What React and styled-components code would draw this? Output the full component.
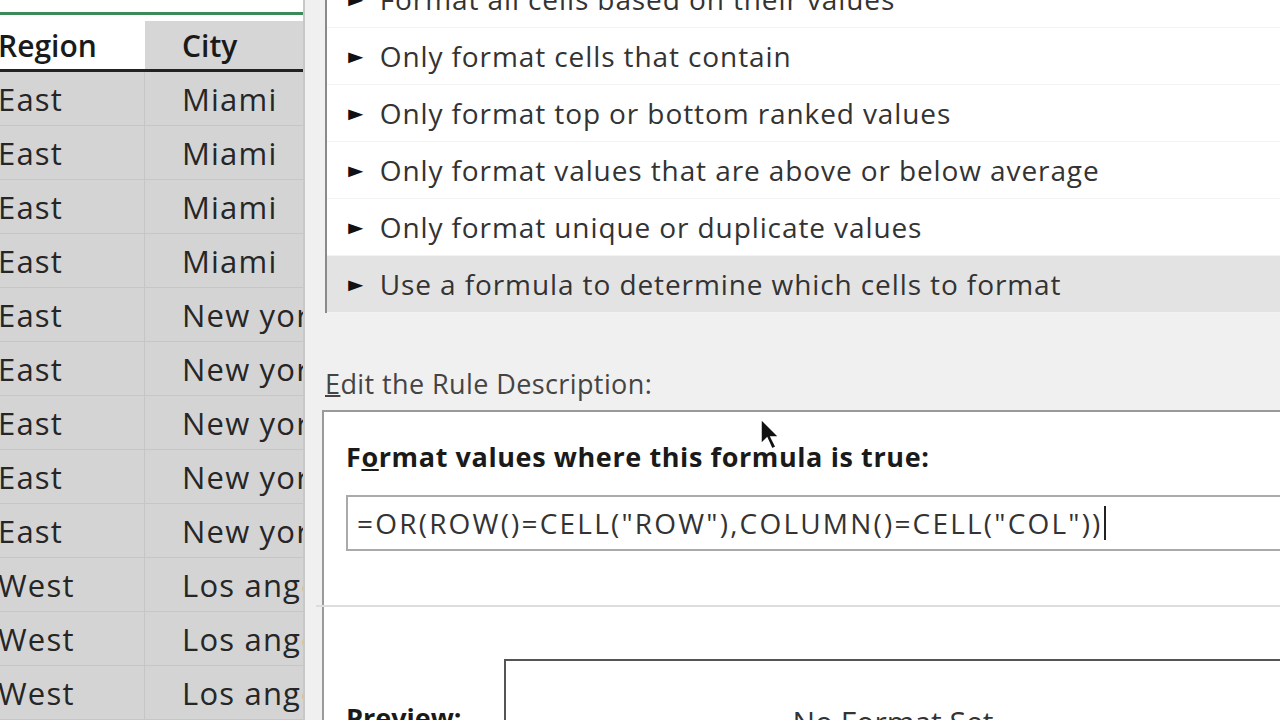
import React from "react";
import styled, { createGlobalStyle } from "styled-components";

const G = createGlobalStyle`
  html,body{margin:0;padding:0;}
  body{font-family:"Open Sans","Noto Sans",sans-serif;}
`;
const Page = styled.div`
  width:1280px;height:720px;overflow:hidden;display:flex;background:#fff;position:relative;
`;
const Sheet = styled.div`
  width:303px;flex:none;overflow:hidden;background:#fff;padding-top:12px;
  border-right:2px solid #c8c8c8;
`;
const Table = styled.div`
  margin-left:-12px;border-top:3px solid #3c8a5a;padding-top:6px;
  display:grid;grid-template-columns:157px 170px;
`;
const Head = styled.div`
  height:48px;display:flex;align-items:center;padding-left:${p=>p.$pl||10}px;
  font-size:30px;font-weight:600;color:#1a1a1a;background:${p=>p.$grey?"#d6d6d6":"#fff"};
  border-bottom:3px solid #222;
`;
const Cell = styled.div`
  height:53px;display:flex;align-items:center;padding-left:${p=>p.$pl||10}px;
  font-size:31px;letter-spacing:1.2px;color:#262626;background:#d4d4d4;white-space:nowrap;overflow:hidden;
  border-bottom:1px solid #c6c6c6;border-right:1px solid #c6c6c6;
`;
const Dialog = styled.div`
  flex:1;background:#f0f0f0;padding-left:20px;display:flex;flex-direction:column;
`;
const List = styled.div`
  background:#fff;border:2px solid #8a8a8a;border-top:none;border-right:none;
  margin-top:-31px;height:344px;box-sizing:border-box;padding-top:2px;
`;
const Item = styled.div`
  height:56px;display:flex;align-items:center;gap:14px;padding-left:20px;
  font-size:28px;color:#333;letter-spacing:0.9px;background:${p=>p.$sel?"#e3e3e3":"#fff"};
  border-bottom:1px solid #f3f3f3;white-space:nowrap;
`;
const Tri = styled.span`font-size:18px;color:#111;display:inline-block;transform:scaleX(1.4);`;
const Label = styled.div`
  margin-top:52px;font-size:27px;letter-spacing:0.4px;color:#444;height:40px;display:flex;align-items:center;
  u{text-decoration-thickness:2px;}
`;
const Panel = styled.div`
  margin-top:8px;margin-left:-3px;background:#fff;border-top:2px solid #9a9a9a;border-left:2px solid #9a9a9a;
  flex:1;padding-left:22px;display:flex;flex-direction:column;
`;
const Bold = styled.div`
  margin-top:24px;font-size:27px;font-weight:700;letter-spacing:0.6px;color:#1a1a1a;height:40px;display:flex;align-items:center;
`;
const Input = styled.div`
  margin-top:19px;height:56px;border:2px solid #aaa;border-right:none;box-sizing:border-box;
  display:flex;align-items:center;padding-left:9px;font-size:28px;color:#333;letter-spacing:2.2px;white-space:nowrap;
`;
const Caret = styled.span`display:inline-block;width:2px;height:34px;background:#222;margin-left:1px;`;
const Sep = styled.div`margin-top:54px;margin-left:-30px;border-top:2px solid #ddd;`;
const PreviewRow = styled.div`display:flex;margin-top:52px;`;
const PLabel = styled.div`width:158px;font-size:27px;font-weight:700;padding-top:40px;color:#1a1a1a;`;
const PBox = styled.div`
  flex:1;height:100px;border:2px solid #555;border-right:none;
  display:flex;justify-content:center;padding-top:40px;font-size:30px;color:#333;
`;
const Cursor = styled.svg`position:absolute;left:760px;top:418px;`;

const cities=["Miami","Miami","Miami","Miami","New york","New york","New york","New york","New york","Los angeles","Los angeles","Los angeles"];
const items=["Format all cells based on their values","Only format cells that contain","Only format top or bottom ranked values","Only format values that are above or below average","Only format unique or duplicate values","Use a formula to determine which cells to format"];

export default function App(){
  return <Page><G/>
    <Sheet><Table>
      <Head>Region</Head><Head $grey $pl={37}>City</Head>
      {cities.map((c,i)=><React.Fragment key={i}>
        <Cell>{i<9?"East":"West"}</Cell><Cell $pl={37}>{c}</Cell>
      </React.Fragment>)}
    </Table></Sheet>
    <Dialog>
      <List>{items.map((t,i)=><Item key={i} $sel={i===5}><Tri>►</Tri>{t}</Item>)}</List>
      <Label><span><u>E</u>dit the Rule Description:</span></Label>
      <Panel>
        <Bold><span>F<u>o</u>rmat values where this formula is true:</span></Bold>
        <Input>=OR(ROW()=CELL("ROW"),COLUMN()=CELL("COL"))<Caret/></Input>
        <Sep/>
        <PreviewRow><PLabel>Preview:</PLabel><PBox>No Format Set</PBox></PreviewRow>
      </Panel>
    </Dialog>
    <Cursor width="22" height="34" viewBox="0 0 22 34"><path d="M1 1 L1 26 L7 20 L12 31 L16 29 L11 19 L19 19 Z" fill="#111" stroke="#fff" strokeWidth="1.5"/></Cursor>
  </Page>;
}
